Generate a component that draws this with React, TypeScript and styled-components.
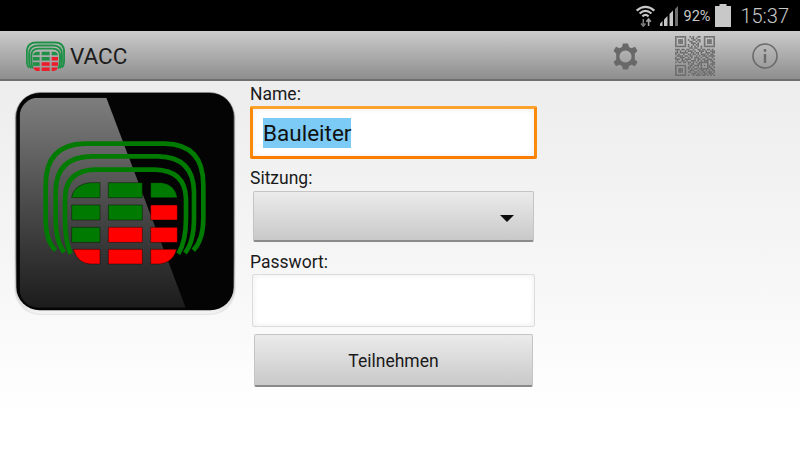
import React from "react";
import styled, { createGlobalStyle } from "styled-components";

const GlobalStyle = createGlobalStyle`
  html, body {
    margin: 0;
    padding: 0;
    background: #fff;
    font-family: Roboto, 'Liberation Sans', sans-serif;
  }
`;

const Page = styled.div`
  width: 800px;
  height: 450px;
  overflow: hidden;
  display: flex;
  flex-direction: column;
`;

// Status bar
const StatusBar = styled.div`
  height: 31px;
  background: #000;
  display: flex;
  align-items: center;
  justify-content: flex-end;
  padding-right: 11px;
  color: #c8c8c8;
`;

const StatusPercent = styled.span`
  font-size: 14.5px;
  margin: 1px 5px 0 4px;
`;

const StatusTime = styled.span`
  font-size: 20px;
  font-weight: 300;
  margin-left: 9px;
`;

// Action bar
const ActionBar = styled.div`
  height: 50px;
  box-sizing: border-box;
  background: linear-gradient(#cbcbcb, #8e8e8e);
  border-bottom: 2px solid #6f6f6f;
  display: flex;
  align-items: center;
  padding: 2px 22px 0 26px;
`;

const AppName = styled.span`
  font-size: 22.5px;
  color: #1c1c1c;
  margin-left: 5px;
  flex: 1;
`;

const ActionIcons = styled.div`
  display: flex;
  align-items: center;
`;

// Main content
const Content = styled.div`
  flex: 1;
  display: flex;
  background: linear-gradient(#ededed 0%, #f6f6f6 50%, #ffffff 92%);
`;

const LogoColumn = styled.div`
  width: 250px;
  padding: 4px 0 0 5px;
  box-sizing: border-box;
`;

const Form = styled.div`
  width: 287px;
  display: flex;
  flex-direction: column;
  padding-top: 3px;
`;

const FieldLabel = styled.label<{ $gap?: number }>`
  font-size: 17.5px;
  line-height: 20px;
  height: 20px;
  margin-top: ${(p) => p.$gap ?? 0}px;
  color: #1a1a1a;
`;

const TextField = styled.div<{ $focused?: boolean }>`
  box-sizing: border-box;
  height: 53px;
  margin: ${(p) => (p.$focused ? "2px 0 0" : "2px 2px 0")};
  background: #fff;
  border-radius: 2px;
  display: flex;
  align-items: center;
  padding-left: ${(p) => (p.$focused ? "10px" : "0")};
  font-size: 22.5px;
  color: #111;
  border: ${(p) => (p.$focused ? "3px solid #fb8a0a" : "1px solid #dcdcdc")};
  ${(p) => p.$focused && "border-top-color: #fca32e; border-bottom-color: #fb7d00;"}
  box-shadow: inset 0 0 6px rgba(0, 0, 0, 0.08);
`;

const SelectedText = styled.span`
  background: #7ccbf6;
  line-height: 30px;
  height: 30px;
`;

const Raised = styled.div`
  box-sizing: border-box;
  background: linear-gradient(#ebebeb, #c9c9c9);
  border: 1px solid #c4c4c4;
  border-bottom: 2px solid #8a8a8a;
  border-radius: 2px;
  display: flex;
  align-items: center;
`;

const Select = styled(Raised)`
  height: 51px;
  margin: 3px 3px 10px;
  justify-content: flex-end;
  padding-right: 19px;
`;

const Caret = styled.div`
  width: 0;
  height: 0;
  border-left: 7px solid transparent;
  border-right: 7px solid transparent;
  border-top: 7px solid #0c0c0c;
  margin-top: 4px;
`;

const SubmitButton = styled(Raised)`
  height: 53px;
  margin: 7px 4px 0;
  padding-top: 2px;
  justify-content: center;
  font-size: 17.5px;
  color: #1a1a1a;
`;

// Drawings
const Arc: React.FC<{ d: string; w: number; color: string }> = ({ d, w, color }) => (
  <path d={d} fill="none" stroke={color} strokeWidth={w} />
);

const cells: { d: string; red?: boolean }[] = [
  { d: "M200 338 V335 Q208 298 255 293 H285 V338 Z" },
  { d: "M310 293 H412 V338 H310 Z" },
  { d: "M437 293 H470 Q510 298 517 338 H437 Z" },
  { d: "M200 360 H285 V405 H200 Z" },
  { d: "M310 360 H412 V405 H310 Z" },
  { d: "M437 360 H517 V405 H437 Z", red: true },
  { d: "M200 427 H285 V472 H200 Z" },
  { d: "M310 427 H412 V472 H310 Z", red: true },
  { d: "M437 427 H517 V472 H437 Z", red: true },
  { d: "M205 493 H285 V537 H255 Q218 535 205 493 Z", red: true },
  { d: "M310 493 H412 V537 H310 Z", red: true },
  { d: "M437 493 H515 Q505 532 465 537 H437 Z", red: true },
];

const Mark: React.FC<{ arcWidth: number; green: string; red: string; edge?: boolean }> = ({
  arcWidth,
  green,
  red,
  edge,
}) => (
  <g>
    <Arc w={arcWidth} color={green} d="M152 496 Q122 470 122 400 V300 Q122 178 240 176 H480 Q595 178 595 300 V400 Q595 465 565 496" />
    <Arc w={arcWidth} color={green} d="M178 502 Q152 470 152 400 V320 Q152 216 260 214 H460 Q565 216 567 320 V400 Q567 470 540 504" />
    <Arc w={arcWidth} color={green} d="M197 506 Q180 470 180 400 V340 Q182 256 270 254 H450 Q540 256 543 340 V400 Q543 470 520 506" />
    {cells.map((c, i) => (
      <path
        key={i}
        d={c.d}
        fill={c.red ? red : green}
        stroke={edge ? "rgba(0,0,0,0.4)" : "none"}
        strokeWidth={edge ? 3 : 0}
      />
    ))}
  </g>
);

const AppLogo: React.FC = () => (
  <svg width={240} height={240} viewBox="0 0 720 720" style={{ display: "block" }}>
    <defs>
      <linearGradient id="glare" x1="0" y1="0" x2="0" y2="1">
        <stop offset="0" stopColor="#7e7e7e" />
        <stop offset="0.4" stopColor="#555" />
        <stop offset="1" stopColor="#1c1c1c" />
      </linearGradient>
      <linearGradient id="rim" x1="0" y1="0" x2="0" y2="1">
        <stop offset="0" stopColor="#6a6a6a" />
        <stop offset="0.75" stopColor="#8a8a8a" />
        <stop offset="1" stopColor="#f5f5f5" />
      </linearGradient>
      <clipPath id="face">
        <rect x="44" y="38" width="632" height="630" rx="56" />
      </clipPath>
    </defs>
    <rect x="28" y="20" width="664" height="670" rx="78" fill="#b8b8b8" opacity="0.3" />
    <rect x="31" y="22" width="658" height="664" rx="76" fill="url(#rim)" />
    <rect x="34" y="24" width="652" height="652" rx="70" fill="#040404" />
    <path d="M44 38 H304 L542 668 H44 Z" fill="url(#glare)" clipPath="url(#face)" />
    <Mark arcWidth={14} green="#007a00" red="#ff0000" edge />
  </svg>
);

const HeaderLogo: React.FC = () => (
  <svg width={39} height={31} viewBox="112 165 494 378" style={{ display: "block" }}>
    <Mark arcWidth={24} green="#1f9147" red="#ee1c2b" />
  </svg>
);

const WifiIcon: React.FC = () => (
  <svg width={21} height={23} viewBox="0 0 23 26" fill="none" stroke="#c8c8c8">
    <path d="M1.5 7.5 Q11.5 -1 21.5 7.5" strokeWidth="2.4" />
    <path d="M4.8 10.8 Q11.5 4.5 18.2 10.8" strokeWidth="2.4" />
    <path d="M8 14 Q11.5 10.8 15 14" strokeWidth="2.4" />
    <path d="M9 17 V25 M6.5 22 L9 25 L11.5 22" stroke="#7a7a7a" strokeWidth="1.8" />
    <path d="M15 25 V17 M12.5 20 L15 17 L17.5 20" stroke="#a5a5a5" strokeWidth="1.8" />
  </svg>
);

const SignalIcon: React.FC = () => (
  <svg width={20} height={20} viewBox="0 0 20 20" fill="#c8c8c8" style={{ marginLeft: 4 }}>
    <path d="M0 20 V17.5 L2.5 15 V20 Z" />
    <path d="M4 20 V13.5 L7.5 10 V20 Z" />
    <path d="M9.5 20 V8 L13 4.5 V20 Z" />
    <path d="M15 20 V3 L18 0 V20 Z" fill="#6e6e6e" />
  </svg>
);

const BatteryIcon: React.FC = () => (
  <svg width={16} height={23} viewBox="0 0 16 23" fill="#c8c8c8">
    <rect x="4.5" y="0" width="7" height="2" />
    <rect x="0" y="2" width="16" height="21" />
  </svg>
);

const GearIcon: React.FC = () => (
  <svg width={27} height={27} viewBox="0 0 27 27">
    <path
      fillRule="evenodd"
      fill="#686868"
      d="M11 0.5 H16 L17 4 L19.5 5.2 L23 3.8 L25.5 8 L22.8 10.5 V13.5 L22.8 16.5 L25.5 19 L23 23.2 L19.5 21.8 L17 23 L16 26.5 H11 L10 23 L7.5 21.8 L4 23.2 L1.5 19 L4.2 16.5 V10.5 L1.5 8 L4 3.8 L7.5 5.2 L10 4 Z M13.5 7.4 A6.1 6.1 0 1 0 13.5 19.6 A6.1 6.1 0 1 0 13.5 7.4 Z"
    />
  </svg>
);

const qrRows = [
  "1111111001010011001111111",
  "1000001000110100001000001",
  "1011101010011011001011101",
  "1011101001100101001011101",
  "1011101000111010001011101",
  "1000001010010110001000001",
  "1111111010101010101111111",
  "0000000001101100100000000",
  "1110110110010011011011010",
  "0101001011101001110100111",
  "1101111100110110100111011",
  "1010010011011010111010110",
  "0111101101100101011101111",
  "1001110010101110100110010",
  "1110101111001011011011101",
  "0100110100111010101110110",
  "1011011011010101111110011",
  "0000000010110011100010111",
  "1111111001101110101011010",
  "1000001011010010100011101",
  "1011101010101101111110110",
  "1011101001110010110101011",
  "1011101011001101011011101",
  "1000001000111010101101110",
  "1111111010010111011010101",
];

const QrIcon: React.FC = () => (
  <svg width={40} height={40} viewBox="0 0 25 25" fill="#6a6a6a" style={{ margin: "0 37px 0 36px" }}>
    {qrRows.map((row, y) =>
      row.split("").map((v, x) => (v === "1" ? <rect key={`${x}-${y}`} x={x} y={y} width={1} height={1} /> : null))
    )}
  </svg>
);

const InfoIcon: React.FC = () => (
  <svg width={26} height={26} viewBox="0 0 26 26" fill="none" stroke="#6a6a6a">
    <circle cx="13" cy="13" r="12" strokeWidth="1.6" />
    <path d="M13 11 V20" strokeWidth="2.4" />
    <circle cx="13" cy="7.5" r="1.4" fill="#6a6a6a" stroke="none" />
  </svg>
);

const App: React.FC = () => (
  <Page>
    <GlobalStyle />
    <StatusBar>
      <WifiIcon />
      <SignalIcon />
      <StatusPercent>92%</StatusPercent>
      <BatteryIcon />
      <StatusTime>15:37</StatusTime>
    </StatusBar>
    <ActionBar>
      <HeaderLogo />
      <AppName>VACC</AppName>
      <ActionIcons>
        <GearIcon />
        <QrIcon />
        <InfoIcon />
      </ActionIcons>
    </ActionBar>
    <Content>
      <LogoColumn>
        <AppLogo />
      </LogoColumn>
      <Form>
        <FieldLabel>Name:</FieldLabel>
        <TextField $focused>
          <SelectedText>Bauleiter</SelectedText>
        </TextField>
        <FieldLabel $gap={9}>Sitzung:</FieldLabel>
        <Select>
          <Caret />
        </Select>
        <FieldLabel>Passwort:</FieldLabel>
        <TextField />
        <SubmitButton>Teilnehmen</SubmitButton>
      </Form>
    </Content>
  </Page>
);

export default App;
